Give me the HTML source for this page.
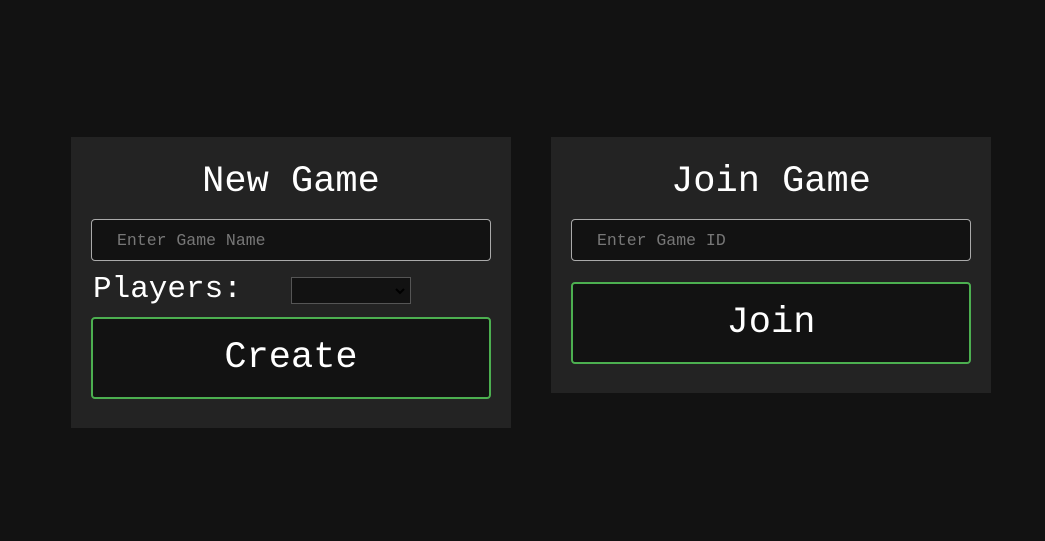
<!DOCTYPE html>
<html><head><style>
body{margin:0;background:#121212;width:1045px;height:541px;position:relative;font-family:"Liberation Mono",monospace;color:#fff;overflow:hidden}
.p{position:absolute;background:#232323}
.t{position:absolute;left:0;right:0;text-align:center;font-size:37px;line-height:1}
.in{position:absolute;box-sizing:border-box;border:1px solid #aaa;border-radius:4px;background:#121212;color:#777;font-size:16.5px;padding-left:25px;display:flex;align-items:center}
.b{position:absolute;box-sizing:border-box;border:2px solid #4caf50;border-radius:4px;background:#121212;font-size:37px;display:flex;align-items:center;justify-content:center}
</style></head><body>
<div class="p" style="left:71px;top:137px;width:440px;height:291px">
<div class="t" style="top:27px">New Game</div>
<div class="in" style="left:20px;top:82px;width:400px;height:42px">Enter Game Name</div>
<div style="position:absolute;left:22px;top:138px;font-size:31px;line-height:30px">Players:</div>
<div style="position:absolute;left:220px;top:140px;width:120px;height:27px;box-sizing:border-box;border:1px solid #555;background:#121212"><svg style="position:absolute;right:5px;top:9px" width="10" height="8"><path d="M1 2L5 6L9 2" stroke="#000" stroke-width="2" fill="none"/></svg></div>
<div class="b" style="left:20px;top:180px;width:400px;height:82px">Create</div>
</div>
<div class="p" style="left:551px;top:137px;width:440px;height:256px">
<div class="t" style="top:27px">Join Game</div>
<div class="in" style="left:20px;top:82px;width:400px;height:42px">Enter Game ID</div>
<div class="b" style="left:20px;top:145px;width:400px;height:82px">Join</div>
</div>
</body></html>
